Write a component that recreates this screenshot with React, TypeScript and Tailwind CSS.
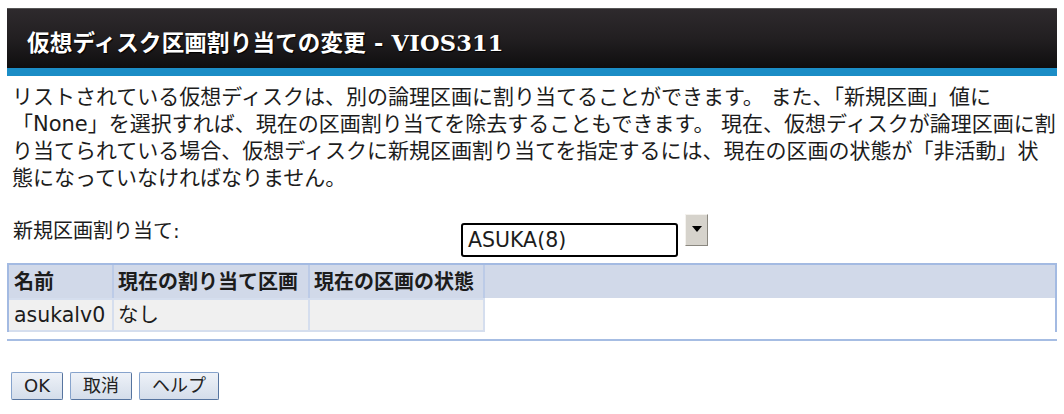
import React from 'react';

const bodyFont = '[font-family:"DejaVu_Sans","Noto_Sans_CJK_JP",sans-serif]';

export default function App() {
  const buttons = ['OK', '取消', 'ヘルプ'];

  return (
    <div className={`w-[1064px] h-[414px] bg-white text-[#1c1c1c] ${bodyFont} overflow-hidden`}>
      {/* Title bar */}
      <div className="pt-[8px] px-[7px]">
        <div className="h-[60px] pl-[20px] pt-[11px] flex items-center bg-gradient-to-b from-[#2e2a2d] via-[#221f21] to-[#0f0e0f] border-t border-[#555]">
          <h1 className='text-[22.5px] font-bold text-white [font-family:"DejaVu_Serif","Noto_Sans_CJK_JP",serif] [text-shadow:1px_1px_1px_#000] tracking-[0.2px]'>
            仮想ディスク区画割り当ての変更 - VIOS311
          </h1>
        </div>
        <div className="h-[8px] bg-[#1b8dc6]" />
      </div>

      {/* Description */}
      <p className="mt-[8px] pl-[12px] text-[21px] leading-[27px] whitespace-nowrap">
        リストされている仮想ディスクは、別の論理区画に割り当てることができます。 また、「新規区画」値に
        <br />
        「None」を選択すれば、現在の区画割り当てを除去することもできます。 現在、仮想ディスクが論理区画に割
        <br />
        り当てられている場合、仮想ディスクに新規区画割り当てを指定するには、現在の区画の状態が「非活動」状
        <br />
        態になっていなければなりません。
      </p>

      {/* New partition selection */}
      <div className="mt-[21px] h-[44px] flex items-start">
        <label className="w-[461px] pl-[13px] mt-[5px] text-[20px] leading-[27px]">新規区画割り当て:</label>
        <div className="mt-[10px] w-[217px] h-[34px] border-2 border-black rounded-[3px] pl-[5px] flex items-center text-[20.5px] bg-white">
          ASUKA(8)
        </div>
        <div className="ml-[7px] mt-[1px] w-[23px] h-[32px] bg-[#d6d3cc] border border-t-[#f4f2ee] border-l-[#f4f2ee] border-r-[#8a877f] border-b-[#8a877f] flex justify-center pt-[11px]">
          <svg width="10" height="6" viewBox="0 0 10 6">
            <polygon points="0,0 10,0 5,6" fill="#000" />
          </svg>
        </div>
      </div>

      {/* Disk table */}
      <div className="mt-[6px] mx-[7px] border-2 border-b-0 border-[#a3bae2]">
        <div className="flex h-[33px] bg-[#d1d9e9] text-[20px] font-bold">
          <div className="w-[105px] pl-[5px] flex items-center border-r-2 border-[#bccbe7]">名前</div>
          <div className="w-[196px] pl-[4px] flex items-center border-r-2 border-[#bccbe7]">現在の割り当て区画</div>
          <div className="w-[175px] pl-[4px] flex items-center border-r-2 border-[#bccbe7]">現在の区画の状態</div>
          <div className="flex-1" />
        </div>
        <div className="flex h-[34px] text-[20.5px]">
          <div className="w-[105px] pl-[5px] flex items-center bg-[#f0f0f0] border-t-2 border-r-2 border-b-2 border-[#d5deee]">asukalv0</div>
          <div className="w-[196px] pl-[4px] flex items-center bg-[#f0f0f0] border-t-2 border-r-2 border-b-2 border-[#d5deee]">なし</div>
          <div className="w-[175px] bg-[#f0f0f0] border-t-2 border-r-2 border-b-2 border-[#d5deee]" />
          <div className="flex-1 bg-white" />
        </div>
      </div>
      <div className="mt-[7px] mx-[7px] h-[2px] bg-[#a6bde3]" />

      {/* Buttons */}
      <div className="mt-[31px] pl-[11px] flex gap-[7px]">
        {buttons.map((b) => (
          <button
            key={b}
            className="h-[28px] px-[12px] text-[18px] leading-none text-[#222] bg-gradient-to-b from-[#eef2f8] to-[#d4ddea] border border-[#86a3cc] border-r-[#56749f] border-b-[#56749f] rounded-[2px]"
          >
            {b}
          </button>
        ))}
      </div>
    </div>
  );
}
